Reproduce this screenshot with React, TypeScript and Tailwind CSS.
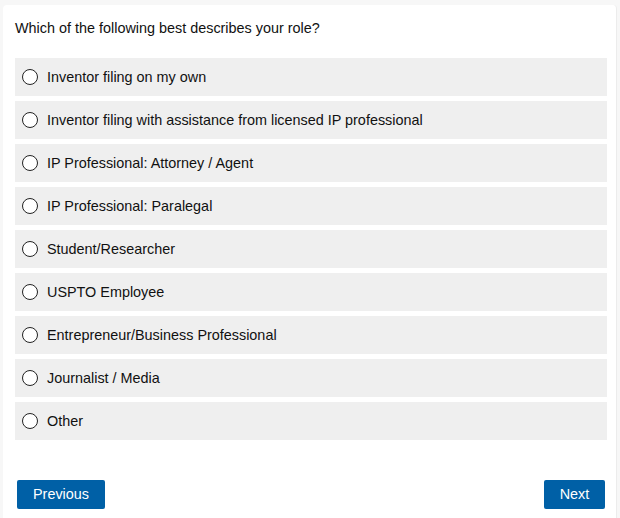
import React from "react";

const options = [
  "Inventor filing on my own",
  "Inventor filing with assistance from licensed IP professional",
  "IP Professional: Attorney / Agent",
  "IP Professional: Paralegal",
  "Student/Researcher",
  "USPTO Employee",
  "Entrepreneur/Business Professional",
  "Journalist / Media",
  "Other",
];

export default function App() {
  return (
    <div
      className="w-[620px] h-[518px] overflow-hidden bg-[#f7f7f7] pl-[3px] pr-[3px] pt-[5px]"
      style={{ fontFamily: '"Liberation Sans", Arial, sans-serif' }}
    >
      <div className="bg-white rounded-[4px] border-r border-[#ececec] h-[600px] pl-[12px] pr-[9px] pt-[14px]">
        <div className="text-[14.4px] leading-[18px] text-[#111]">
          Which of the following best describes your role?
        </div>
        <div className="mt-[21px] flex flex-col gap-[5.5px]">
          {options.map((o) => (
            <label
              key={o}
              className="flex items-center h-[37.5px] bg-[#efefef] pl-[7px] text-[14.4px] text-[#111]"
            >
              <span className="w-[16px] h-[16px] rounded-full border-[1.5px] border-[#222] bg-white" />
              <span className="ml-[9px] leading-[18px]">{o}</span>
            </label>
          ))}
        </div>
        <div className="mt-[40.5px] flex justify-between pl-[2px] pr-[2px]">
          <button className="h-[29px] w-[88px] rounded-[2px] bg-[#0060a6] text-white text-[14.4px]">
            Previous
          </button>
          <button className="h-[29px] w-[61px] rounded-[2px] bg-[#0060a6] text-white text-[14.4px]">
            Next
          </button>
        </div>
      </div>
    </div>
  );
}
